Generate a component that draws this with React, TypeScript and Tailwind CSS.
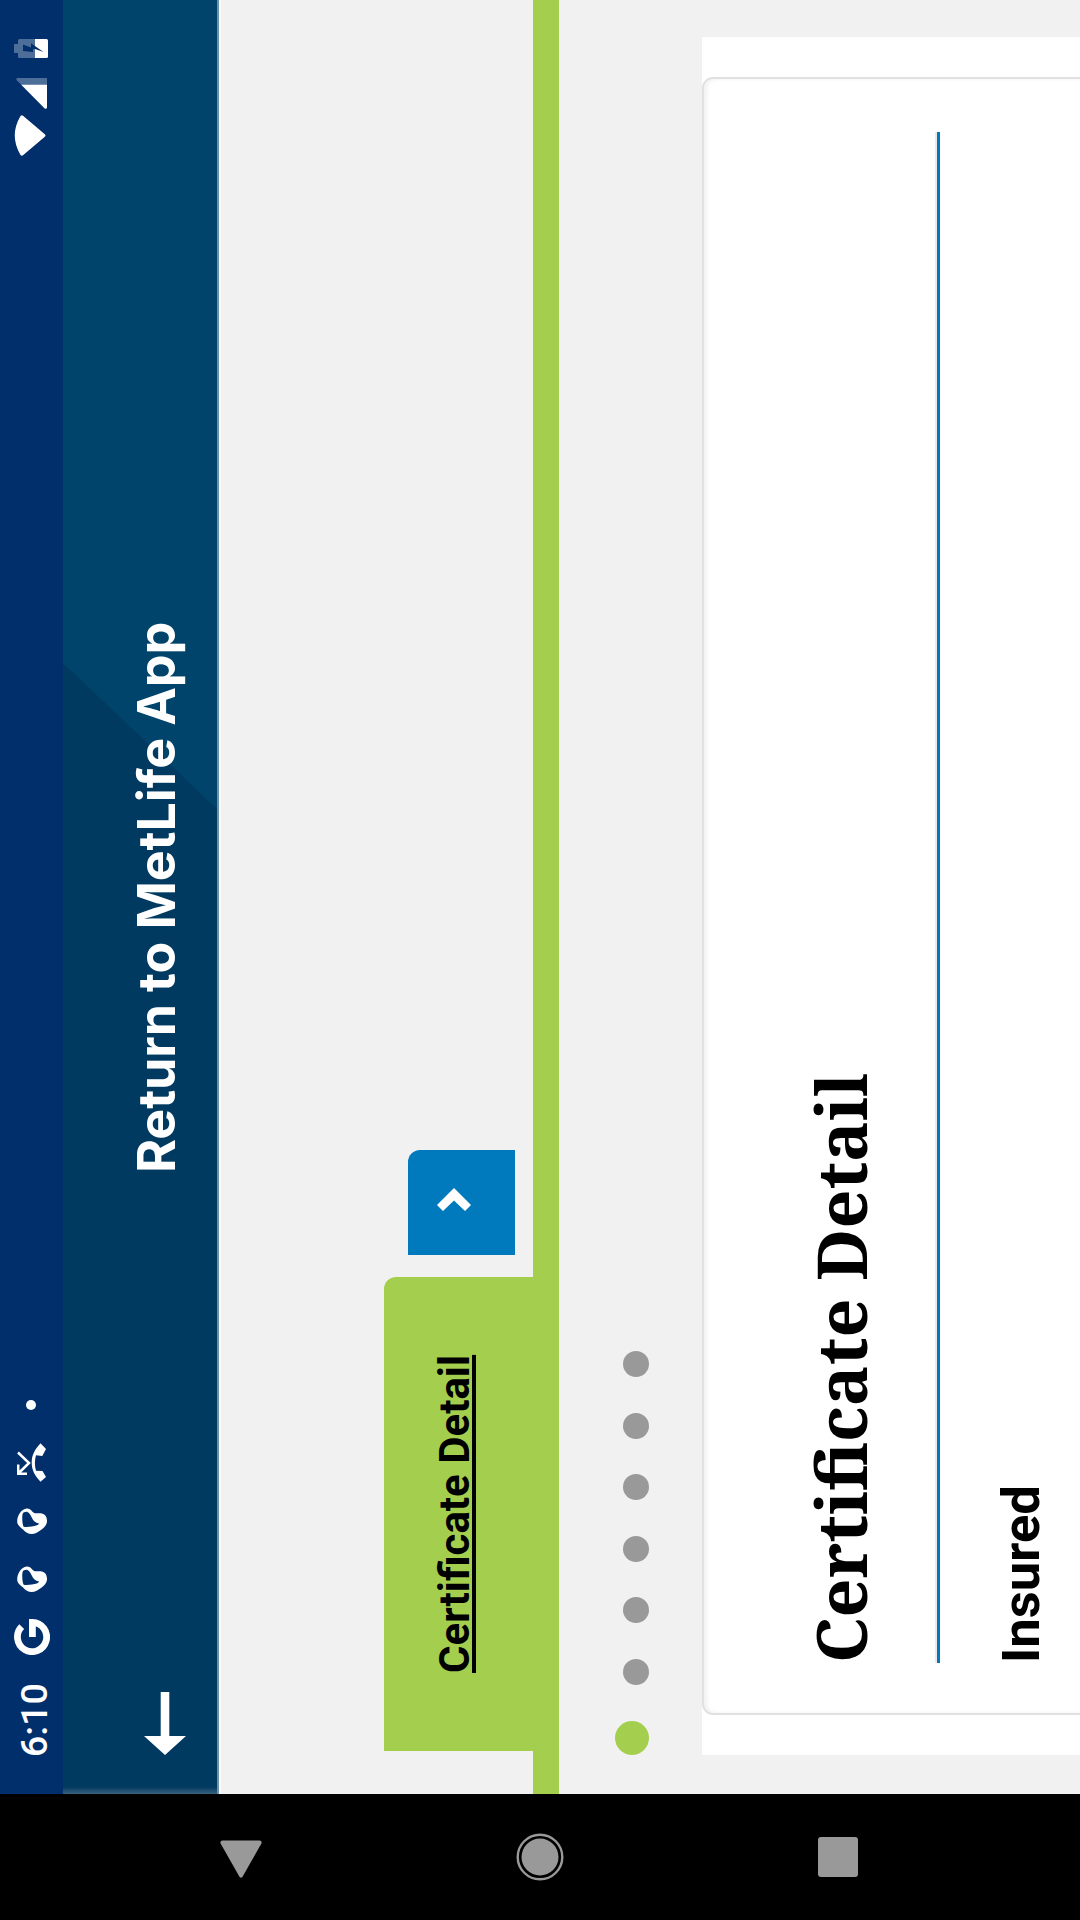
function NavRail() {
  return (
    <nav className="flex h-full w-[126px] shrink-0 flex-col items-start bg-black pt-[220px]">
      <svg className="ml-[42px] h-[42px] w-[38px]" viewBox="0 0 38 42">
        <path d="M1 19.6 34.5.6Q37.5-.2 37.5 2.5V39.5Q37.5 42.2 34.5 41.4L1 22.4Q-.6 21 1 19.6Z" fill="#999" />
      </svg>
      <svg className="mt-[254px] ml-[39px] h-[48px] w-[48px]" viewBox="0 0 48 48">
        <circle cx="24" cy="24" r="22.3" fill="none" stroke="#999" strokeWidth="2.4" />
        <circle cx="24" cy="24" r="18.5" fill="#999" />
      </svg>
      <div className="mt-[254px] ml-[43px] size-[40px] rounded-[3px] bg-[#999]" />
    </nav>
  );
}

function LeafIcon({ className }: { className: string }) {
  return (
    <svg className={className} viewBox="0 0 26 30" fill="#fff" fillRule="evenodd">
      <path d="M12 .2C18 0 25 4 25.5 9.7C25.8 14 22 15 20.9 17.3C20.3 19.5 21.3 22 20.5 25C19.5 28.5 17 29.8 13.5 30C9 30.2 6 27 3.7 23.5C1.6 20.5 0 18 0 14.7C0 11 2 8.5 4.3 6.3C6.5 3.5 9 .3 12 .2Z M20.3 5.7C21.8 6.5 22.7 9 21.8 10.8C21 12.5 19.5 13.2 17.8 14.1C15.5 15.3 12.5 16.5 11.3 19.5L10.6 22C9 22 8.2 18.5 7.5 15C7 12 6.8 9 7.2 6.7C9 5.3 17.5 4.8 20.3 5.7Z" />
    </svg>
  );
}

function StatusBar() {
  return (
    <div className="flex h-[63px] shrink-0 items-start bg-[#002f6c] pl-[36px] text-white">
      <span className="mt-[12px] w-[101px] pl-px text-[37.5px] leading-[44px] font-medium">6:10</span>
      <svg className="mt-[14px] ml-[2px] h-[36px] w-[36px]" viewBox="0 0 36 36" fill="none" stroke="#fff" strokeWidth="6.8">
        <path d="M28.3 7.7A14.6 14.6 0 1 0 32.6 18.4H18" />
      </svg>
      <LeafIcon className="mt-[17px] ml-[27px] h-[30px] w-[26px]" />
      <LeafIcon className="mt-[17px] ml-[32px] h-[30px] w-[26px]" />
      <svg className="mt-[17px] ml-[26px] h-[30px] w-[39px]" viewBox="0 0 39 30">
        <path d="M38.8 23.5 33 29 26 25.3 26.7 19Q19 16.8 11.3 19L11 25.5 5 29 .2 23.5C7 17.5 12 14.7 19.5 14.7S32 17.5 38.8 23.5Z" fill="#fff" />
        <path d="M29.5 1 19 12 8.5 1.3M17.5 1.2H8.2V10" fill="none" stroke="#fff" strokeWidth="2.5" />
      </svg>
      <div className="mt-[26px] ml-[33px] size-[10px] rounded-full bg-white" />
      <div className="ml-auto flex items-start pr-[39px]">
        <svg className="mt-[14px] h-[32px] w-[41px]" viewBox="0 0 41 32">
          <path d="M1 6.5Q20.5-5 40 6.5Q41.2 7.7 40.3 9L22 30.5Q20.5 32.5 19 30.5L.7 9Q-.2 7.7 1 6.5Z" fill="#fff" />
        </svg>
        <svg className="mt-[16px] ml-[6px] h-[31px] w-[31px]" viewBox="0 0 31 31">
          <path d="M24 5.5 28.5 1Q31-.8 31 2V31H24Z" fill="#4d6e98" />
          <path d="M.6 28.7 24.2 5.2V31H1.5Q-.3 30.5.6 28.7Z" fill="#fff" />
        </svg>
        <svg className="mt-[14px] ml-[20px] h-[34px] w-[19px]" viewBox="0 0 19 34">
          <path d="M5 0H14V4H17.5Q19 4 19 5.5V21H0V5.5Q0 4 1.5 4H5Z" fill="#4d6e98" />
          <path d="M0 21H19V32.5Q19 34 17.5 34H1.5Q0 34 0 32.5Z" fill="#fff" />
          <path d="M13.5 9H7L6 19H9V21L6 29.5 14.8 17H10.5Z" fill="#002f6c" />
        </svg>
      </div>
    </div>
  );
}

function Header() {
  return (
    <header className="shrink-0 border-b-2 border-[#fbfbfb]">
      <div className="relative flex h-[156px] items-start border-b-2 border-[#6a90aa] bg-[#003a61] pl-[39px] text-white">
        <svg className="absolute inset-0 h-[154px] w-full" viewBox="0 0 1794 154" preserveAspectRatio="none">
          <path d="M1131 0H1794V154H985Z" fill="#00446c" />
        </svg>
        <div className="absolute inset-y-0 left-0 w-[7px] bg-linear-to-r from-[#36617f] to-[#003a61]" />
        <svg className="relative mt-[81px] h-[42px] w-[63px]" viewBox="0 0 63 42" fill="#fff">
          <path d="M0 21 19 0V16.7H63V25.3H19V42Z" />
        </svg>
        <h1 className="relative mt-[64px] ml-[519px] font-['Inter',sans-serif] text-[52px] leading-[60px] font-bold tracking-[-0.15px] whitespace-nowrap">
          Return to MetLife App
        </h1>
      </div>
    </header>
  );
}

function Tabs() {
  return (
    <div className="mt-[163px] flex shrink-0 items-end border-b-[26px] border-[#a4cf4e] pl-[43px]">
      <div className="h-[149px] w-[474px] rounded-tr-[12px] bg-[#a4cf4e] pt-[46px] pl-[78px]">
        <a className="text-[42px] leading-[50px] font-bold whitespace-nowrap text-black underline decoration-[4px] underline-offset-[3px] [text-decoration-skip-ink:none]">
          Certificate Detail
        </a>
      </div>
      <button className="mb-[18px] ml-[22px] flex h-[107px] w-[105px] items-start rounded-tr-[12px] bg-[#007abc] pt-[29px] pl-[44px]">
        <svg className="h-[34px] w-[23px]" viewBox="0 0 23 34" fill="#fff">
          <path d="M6 0 23 17 6 34 0 28 10.5 17 0 6Z" />
        </svg>
      </button>
    </div>
  );
}

function Steps() {
  return (
    <div className="mt-[56px] flex h-[34px] shrink-0 items-end pl-[39px]">
      <div className="size-[34px] rounded-full bg-[#a4cf4e]" />
      <div className="ml-[36px] flex gap-[35.6px]">
        {[2, 3, 4, 5, 6, 7].map((step) => (
          <div key={step} className="size-[26px] rounded-full bg-[#999]" />
        ))}
      </div>
    </div>
  );
}

function DetailPanel() {
  return (
    <section className="mt-[53px] mr-[37px] ml-[39px] h-[378px] shrink-0 overflow-hidden bg-white px-[40px]">
      <div className="h-[600px] rounded-[11px] border-2 border-[#e1e1e1] px-[50px] pt-[97px] text-black shadow-[inset_0_3px_4px_rgba(0,0,0,0.06)]">
        <h2 className="font-['Noto_Serif',serif] text-[68.2px] leading-[80px] font-bold whitespace-nowrap">Certificate Detail</h2>
        <div className="mt-[54px] mr-[3px] h-[5px] border-t-2 border-[#ebebeb] bg-[#007abc]" />
        <h3 className="mt-[51px] text-[52.5px] leading-[60px] font-bold">Insured</h3>
      </div>
    </section>
  );
}

export default function App() {
  return (
    <div className="h-[1920px] w-[1080px] overflow-hidden">
      <div className="flex h-[1080px] w-[1920px] origin-top-left overflow-hidden font-['Roboto',sans-serif] [transform:rotate(-90deg)_translateX(-1920px)]">
        <NavRail />
        <main className="flex h-full min-w-0 flex-1 flex-col overflow-hidden bg-[#f1f1f1]">
          <StatusBar />
          <Header />
          <Tabs />
          <Steps />
          <DetailPanel />
        </main>
      </div>
    </div>
  );
}
